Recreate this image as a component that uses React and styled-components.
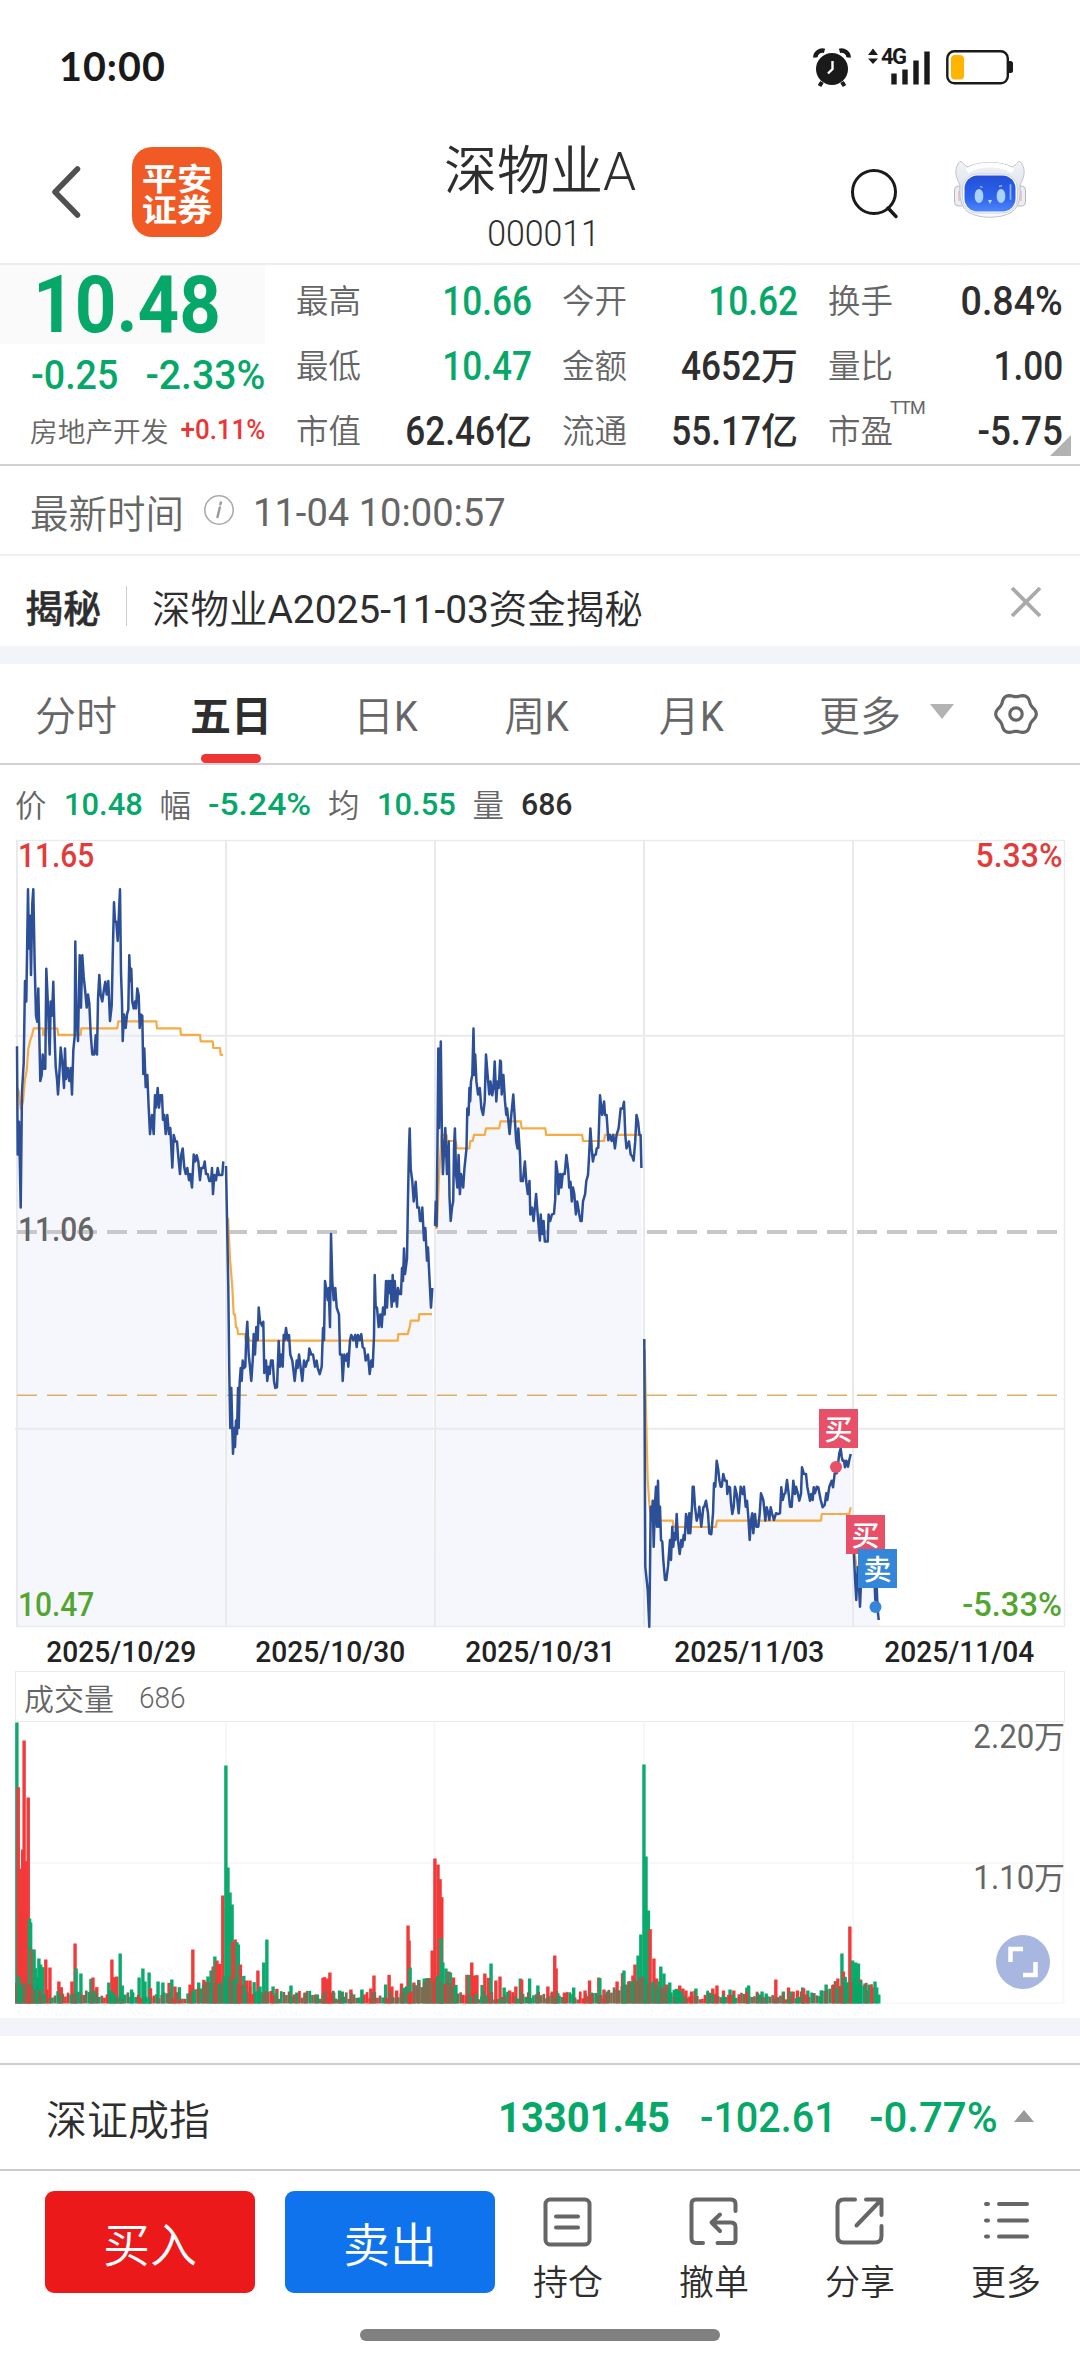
import styled, { createGlobalStyle } from 'styled-components';
import React from 'react';

const GREEN = '#06a869';
const RED = '#ee3535';
const DARK = '#2e2e2e';
const GREY = '#666666';

const quotes = [
  { label: '最高', value: '10.66', color: GREEN },
  { label: '今开', value: '10.62', color: GREEN },
  { label: '换手', value: '0.84%', stretch: 0.94 },
  { label: '最低', value: '10.47', color: GREEN },
  { label: '金额', value: '4652', unit: '万' },
  { label: '量比', value: '1.00' },
  { label: '市值', value: '62.46', unit: '亿' },
  { label: '流通', value: '55.17', unit: '亿' },
  { label: '市盈', value: '-5.75', sup: 'TTM', stretch: 0.92 },
];

const dates = ['2025/10/29', '2025/10/30', '2025/10/31', '2025/11/03', '2025/11/04'];

// every day has its own grid: origin, units per pixel, price points, average points
const days = [
  {
    ox: 0, oy: 830, sx: 3, sy: 2.45,
    price: '51,530 53,795 57,715 62,925 66,640 71,570 75,370 79,420 84,145 87,290 90,210 93,355 97,180 100,145 104,330 108,455 112,470 115,388 118,500 121,615 125,600 128,550 132,585 136,585 139,340 144,430 149,550 152,420 156,455 160,372 164,510 167,580 171,610 174,648 178,600 182,533 187,570 192,632 195,535 198,610 203,583 208,615 212,583 216,648 220,540 224,505 226,273 229,450 234,517 239,307 243,435 247,307 251,360 255,390 260,435 264,403 268,425 272,500 277,550 283,550 287,503 291,550 294,415 298,355 302,405 307,420 312,390 316,372 320,403 325,370 330,468 335,430 338,310 342,177 345,225 349,225 353,272 357,200 360,145 363,350 366,420 368,517 372,452 377,485 381,452 385,440 388,307 391,370 394,340 397,420 401,437 405,420 408,437 412,388 416,405 419,485 422,452 427,455 430,598 433,535 437,630 442,600 446,680 450,745 456,698 461,745 465,650 468,680 473,632 477,680 481,650 486,650 489,710 493,698 497,745 502,698 507,745 511,730 517,827 521,747 526,763 531,763 535,800 540,843 544,795 548,780 553,827 557,843 562,828 567,858 571,843 576,876 581,795 586,812 590,797 595,812 600,858 604,828 610,828 614,812 618,843 623,843 628,860 633,860 636,828 639,892 643,845 648,858 653,828 657,845 667,845 670,812',
    avg: '51,630 56,640 62,683 69,665 75,610 80,590 85,535 91,515 96,503 101,486 129,486 129,502 133,502 136,486 172,486 175,502 242,502 244,486 352,486 355,469 469,469 471,486 541,486 543,502 600,502 602,518 638,518 640,534 660,534 662,551 669,551',
  },
  {
    ox: 0, oy: 830, sx: 3, sy: 2.45,
    price: '678,823 681,950 685,1120 688,1330 691,1465 694,1367 697,1465 699,1528 702,1465 705,1512 708,1447 711,1480 714,1367 716,1465 719,1352 722,1318 725,1350 728,1300 732,1318 736,1315 739,1240 742,1205 746,1285 750,1315 754,1350 758,1300 761,1235 765,1285 769,1218 773,1250 776,1170 780,1203 786,1215 790,1205 793,1330 798,1300 802,1350 806,1315 809,1333 813,1300 818,1300 822,1350 826,1367 831,1365 834,1300 836,1252 840,1315 844,1285 848,1315 851,1237 854,1250 858,1220 863,1250 867,1237 871,1285 877,1300 884,1350 890,1300 893,1318 897,1285 902,1318 907,1350 912,1300 917,1315 922,1300 925,1300 928,1270 934,1285 939,1285 945,1315 950,1300 953,1318 959,1333 965,1315 969,1220 972,1250 975,1105 979,1125 983,1152 986,1122 990,1218 993,990 997,1105 1001,1152 1006,1122 1010,1170 1017,1187 1020,1285 1025,1285 1028,1350 1033,1285 1038,1300 1042,1283 1045,1315 1050,1250 1054,1237 1060,1250 1066,1237 1070,1267 1074,1237 1079,1250 1084,1235 1088,1267 1093,1270 1097,1300 1104,1285 1109,1333 1114,1300 1118,1315 1122,1240 1124,1090 1127,1170 1131,1170 1136,1218 1141,1187 1145,1218 1149,1170 1154,1187 1158,1105 1161,1170 1165,1105 1170,1135 1171,1105 1175,1168 1178,1090 1181,1155 1184,1105 1187,1140 1191,1168 1194,1122 1198,1137 1203,1137 1206,1073 1209,1105 1212,1025 1215,1088 1221,1050 1224,900 1227,780 1229,731 1232,830 1237,860 1241,910 1247,862 1252,925 1257,925 1260,958 1264,958 1267,925 1272,1005 1276,975 1281,1055 1284,1023 1288,1090 1293,1170 1297,1122',
    avg: '684,950 690,1050 697,1120 701,1187 705,1187 708,1218 712,1220 714,1235 735,1235 737,1251 742,1235 748,1251 1193,1251 1195,1235 1223,1235 1229,1218 1232,1202 1256,1202 1258,1186 1296,1186',
  },
  {
    ox: 430, oy: 830, sx: 2.412, sy: 2.45,
    price: '12,970 14,910 16,970 18,760 20,535 22,730 24,620 26,518 29,760 31,843 34,780 37,730 41,843 45,763 47,900 50,958 53,925 56,910 58,780 60,731 63,845 66,876 69,796 72,892 75,843 80,876 83,830 88,780 90,682 93,698 95,632 97,665 99,616 102,600 105,486 107,600 109,550 112,616 116,648 120,632 124,682 128,698 132,665 135,550 139,600 143,648 146,616 150,650 153,632 156,567 160,665 163,616 166,632 169,565 171,567 173,648 177,600 181,665 184,698 186,682 192,745 196,698 201,648 205,715 208,763 211,780 213,731 217,795 219,860 224,860 229,812 232,860 236,892 240,860 242,942 246,925 250,958 256,892 261,958 265,1006 267,942 271,990 274,958 277,1008 284,1008 286,942 290,958 294,942 299,940 302,905 304,812 308,843 310,892 314,843 317,876 320,843 325,843 329,796 333,830 336,876 339,862 342,910 345,876 348,892 352,942 355,910 360,942 363,958 366,958 369,910 374,892 377,860 381,845 383,812 387,731 390,780 393,812 396,796 400,795 402,780 406,778 410,650 415,698 420,665 422,698 426,698 430,760 434,747 438,762 442,747 446,780 450,747 455,731 460,682 465,682 468,666 471,747 474,780 480,763 484,795 488,800 491,810 495,763 498,698 502,715 505,747 508,747 510,828',
    avg: '12,975 17,975 22,845 28,747 40,747 42,762 62,762 65,780 95,780 97,762 103,762 106,747 132,747 135,731 167,731 170,714 219,714 221,731 278,731 280,747 367,747 369,762 420,762 422,747 508,747',
  },
  {
    ox: 600, oy: 1370, sx: 3, sy: 3,
    price: '133,-93 136,590 143,660 148,770 150,600 152,410 156,450 158,392 161,530 165,400 168,350 171,470 174,332 177,470 180,410 183,510 187,515 190,570 195,630 199,630 204,590 210,510 213,570 217,470 220,530 223,490 226,510 230,432 234,510 239,552 244,510 247,530 251,495 254,510 258,432 262,450 265,490 268,430 271,490 276,410 278,350 281,350 285,410 290,452 296,430 298,410 304,470 310,412 313,410 318,392 324,430 328,490 334,493 339,430 342,340 346,350 350,272 355,300 358,330 362,350 365,350 370,312 375,332 380,332 382,372 386,350 390,352 393,400 397,432 401,410 405,350 410,372 416,430 422,350 428,372 432,350 437,410 441,392 445,440 449,510 453,450 457,430 460,490 465,432 469,470 475,470 479,430 483,370 490,390 494,430 496,452 500,412 505,430 508,450 512,412 516,430 522,450 528,430 534,432 540,430 544,352 548,390 553,372 556,370 561,330 566,372 570,410 575,410 580,332 585,372 588,350 594,372 598,392 603,372 606,292 612,312 618,312 622,350 626,372 630,392 634,372 638,390 641,352 645,370 650,350 655,352 662,390 668,412 674,405 679,370 682,390 688,350 695,332 699,352 704,310 710,310 713,290 718,250 722,235 725,260 728,272 732,272 735,292 739,272 744,290 748,270 752,252',
    avg: '134,-60 138,120 143,330 148,400 151,430 155,452 218,452 221,471 347,471 351,452 663,452 665,432 748,432 752,412',
  },
  {
    ox: 600, oy: 1370, sx: 3, sy: 3,
    price: '759,470 762,560 766,640 769,690 773,592 777,650 780,710 783,640 790,560 796,600 804,570 815,610 822,600 826,690 830,650 833,720 836,750',
    avg: '759,520 764,552 770,592 778,600',
  },
];

// x, top and side (g sells, r buys) of the taller minutes
const volumes = '49,246,g 53,440,r 57,684,r 61,795,r 66,627,r 70,300,r 76,662,r 82,471,r 86,834,g 89,846,g 93,927,r 99,927,g 103,983,g 108,1010,g 113,954,g 118,972,g 124,980,g 133,957,r 145,981,r 171,1023,r 178,1040,r 209,1023,r 218,909,r 221,984,g 235,999,g 264,1015,g 270,1011,r 281,1040,r 316,1026,g 325,957,r 333,1010,r 339,1008,r 349,939,g 355,1035,g 382,1047,g 404,1011,g 415,984,g 421,1023,g 433,996,g 437,1043,r 459,1023,g 473,1026,g 491,1027,r 499,1017,g 508,1038,r 521,1040,g 552,1032,r 560,927,r 577,1026,g 592,1018,r 604,1008,g 613,990,g 619,978,r 624,948,g 630,960,r 638,970,r 647,765,r 656,375,g 662,681,g 668,756,g 674,792,g 676,905,r 683,897,r 688,905,g 692,912,g 698,972,r 708,1006,g 716,1020,r 726,1020,r 738,1025,g 749,990,r 755,1038,g 766,966,g 775,897,g 793,1038,g 804,1045,r 845,1035,g 862,1056,g 886,1056,r 920,1062,r 938,1012,r 942,1010,r 951,1014,r 958,996,r 969,1056,g 986,1050,g 994,1053,g 1019,1047,r 1051,1047,g 1077,1044,r 1086,1005,r 1120,1032,g 1130,1003,r 1138,1038,r 1152,1050,r 1166,1029,r 1172,1042,g 1185,855,r 1188,900,r 1191,981,g 1202,1026,r 1216,1018,g 1232,1014,g 1240,1013,g 1246,1014,g 1255,930,r 1263,654,r 1272,672,r 1278,716,r 1283,770,r 1281,893,g 1286,966,g 1295,984,g 1303,993,r 1308,996,g 1317,1011,r 1324,1033,g 1356,1003,r 1362,1003,g 1370,966,r 1378,1005,r 1385,1004,r 1400,1033,g 1408,999,r 1418,1012,r 1426,969,g 1440,1020,r 1452,1008,r 1464,1041,g 1480,1050,r 1498,1038,r 1511,1014,g 1515,1017,r 1538,1014,g 1562,1035,g 1591,1038,r 1604,1053,r 1611,945,r 1615,984,r 1620,1058,g 1639,1056,r 1666,1041,g 1699,1050,r 1712,1020,r 1717,1056,g 1739,1011,r 1742,1013,g 1754,1047,r 1763,1053,g 1792,1023,r 1808,998,r 1812,990,g 1817,1032,g 1826,1023,r 1838,1005,r 1844,972,r 1853,945,g 1861,882,g 1870,372,g 1876,648,g 1883,810,g 1888,866,r 1899,954,r 1907,1014,r 1914,1023,g 1919,978,g 1928,999,g 1936,1032,r 1945,1026,g 1958,1048,g 1964,1045,g 1974,1035,r 1983,1044,r 1992,1050,r 2008,1053,r 2021,1044,g 2056,1056,g 2070,1044,r 2082,1035,r 2101,1050,r 2120,1047,g 2131,1050,r 2169,1041,g 2174,1035,g 2200,1058,r 2213,1053,g 2225,1059,g 2253,1017,r 2275,1053,g 2290,1041,r 2297,1053,g 2316,1050,r 2331,1041,g 2334,1044,r 2346,1050,g 2385,1050,g 2399,1032,g 2421,1032,r 2433,1014,r 2445,939,g 2449,993,r 2453,1011,g 2460,1032,r 2468,858,r 2476,960,g 2485,966,g 2493,969,g 2499,1017,r 2512,1029,r 2520,1050,g 2533,1041,r 2541,1023,g 2546,1041,g 2552,1062,g'
  .split(' ')
  .map((item) => {
    const [x, top, side] = item.split(',');
    return { x: x / 2.904 - 15, h: (1089 - top) / 3, side };
  });

// the quiet minutes between the peaks
const quiet = Array.from({ length: 330 }, (_, i) => {
  const x = 1 + i * 2.6;
  const day = x % 209;
  const near = Math.max(0, 1 - Math.min(day, 209 - day) / 38);
  const noise = Math.abs(Math.sin(i * 12.9898) * 43758.5453) % 1;
  const tint = ['#806b50', '#f43434', '#806b50', GREEN, '#806b50', GREEN];
  return { x, h: 4 + noise * 9 + near * 17, color: tint[Math.floor(noise * 97) % 6] };
});

const toPoints = (day, key) =>
  day[key].split(' ').map((pair) => {
    const [x, y] = pair.split(',').map(Number);
    return [day.ox + x / day.sx - 15, day.oy + y / day.sy - 839];
  });

const join = (points) => points.map((p) => `${p[0].toFixed(1)},${p[1].toFixed(1)}`).join(' ');

// six soft teeth
const gear = Array.from({ length: 72 }, (_, i) => {
  const a = (i * Math.PI) / 36;
  const r = 18.8 + 1.5 * Math.cos(6 * a);
  return [23 + r * Math.cos(a), 23 + r * Math.sin(a)];
});

const App = () => {
  return (
    <Page>
      <GlobalStyle />
      <StatusBar />
      <Header />
      <QuotePanel />
      <TimeRow>
        <span>最新时间</span>
        <InfoIcon viewBox="0 0 32 32">
          <circle cx="16" cy="16" r="14.2" fill="none" stroke="#aaa" strokeWidth="1.6" />
          <path d="M17.8 8.500l-.4 1.800M16.800 13.500l-2.300 9.500" fill="none" stroke="#999" strokeWidth="2.400" strokeLinecap="round" />
        </InfoIcon>
        <Num $size={38.500} $weight={400} $top={5} $sx={0.99}>11-04 10:00:57</Num>
      </TimeRow>
      <NewsRow>
        <NewsTag>揭秘</NewsTag>
        <NewsText>
          深物业<Num $size={39} $weight={400} $ls={-0.1}>A2025-11-03</Num>资金揭秘
        </NewsText>
        <CloseIcon viewBox="0 0 34 34">
          <path d="M3 3l28 28M31 3L3 31" stroke="#aaa" strokeWidth="3.8" />
        </CloseIcon>
      </NewsRow>
      <Band />
      <Tabs />
      <Legend>
        价<Num $size={31.5} $weight={500} $color={GREEN} $w={79} $top={3} $sx={0.98}>10.48</Num>
        幅<Num $size={31.5} $weight={500} $color={GREEN} $w={103} $top={3} $sx={1.07}>-5.24%</Num>
        均<Num $size={31.5} $weight={500} $color={GREEN} $w={79} $top={3} $sx={0.98}>10.55</Num>
        量<Num $size={31.5} $weight={500} $color={DARK} $top={3} $sx={0.96}>686</Num>
      </Legend>
      <PriceChart />
      <Dates>
        {dates.map((date) => (
          <Num key={date} $size={29} $weight={500} $color="#222" $sx={0.97} $origin="center">{date}</Num>
        ))}
      </Dates>
      <VolumeChart />
      <Band />
      <IndexRow>
        <IndexName>深证成指</IndexName>
        <Num $size={42} $weight={700} $color={GREEN} $w={203} $top={2} $sx={0.95}>13301.45</Num>
        <Num $size={42} $weight={500} $color={GREEN} $w={169} $top={2} $sx={0.94}>-102.61</Num>
        <Num $size={42} $weight={500} $color={GREEN} $w={145} $top={2}>-0.77%</Num>
        <Triangle viewBox="0 0 20 12"><path d="M0 12L10 0l10 12z" fill="#999" /></Triangle>
      </IndexRow>
      <BottomBar />
      <HomeBar />
    </Page>
  );
};

const StatusBar = () => (
  <Status>
    <Clock>10:00</Clock>
    <svg width="38" height="40" viewBox="0 0 38 40">
      <circle cx="19" cy="21" r="16" fill="#1a1a1a" />
      <path d="M2.5 9.500C2 5 7 1.500 11.500 2.800M35.500 9.500C36 5 31 1.500 26.500 2.800" stroke="#1a1a1a" strokeWidth="4.500" fill="none" />
      <path d="M9 34l-2.500 4M29 34l2.500 4" stroke="#1a1a1a" strokeWidth="4" />
      <path d="M19.500 13v8l-4.500 4.500" stroke="#fff" strokeWidth="2.400" fill="none" />
    </svg>
    <Signal>
      <svg width="62" height="40" viewBox="0 0 62 40">
        <path d="M0 7l5-6.500L10 7zM0 10.500h10L5 16z" fill="#1a1a1a" />
        <path d="M26 25.500v11M37 21.500v15M48 12.500v24M59 3.500v33" stroke="#1a1a1a" strokeWidth="5.400" />
      </svg>
      <SignalLabel>4G</SignalLabel>
    </Signal>
    <svg width="68" height="40" viewBox="0 -2 68 40">
      <rect x="1.300" y="1.300" width="60.500" height="32" rx="7" fill="none" stroke="#1a1a1a" strokeWidth="2.400" />
      <rect x="5" y="5" width="13" height="24.500" rx="4" fill="#ffb400" />
      <path d="M63 11h1.500q2.500 0 2.500 2.500v7q0 2.500-2.500 2.500H63z" fill="#1a1a1a" />
    </svg>
  </Status>
);

const Header = () => (
  <HeaderBar>
    <HeaderSide>
      <svg width="32" height="56" viewBox="0 0 32 56">
        <path d="M27.500 5L5 28l22.500 23" fill="none" stroke="#505050" strokeWidth="5.500" strokeLinecap="round" strokeLinejoin="round" />
      </svg>
      <Logo>
        <LogoText>平安证券</LogoText>
      </Logo>
    </HeaderSide>
    <TitleBox>
      <Title>深物业<Num $size={53} $weight={300}>A</Num></Title>
      <Num $size={36} $weight={300} $color={DARK} $sx={0.94} $origin="right">000011</Num>
    </TitleBox>
    <HeaderSide $end>
      <SearchIcon viewBox="0 0 50 54">
        <circle cx="24" cy="24" r="21.500" fill="none" stroke="#1a1a1a" strokeWidth="3" />
        <path d="M38 40l8 8.500" stroke="#1a1a1a" strokeWidth="3.400" strokeLinecap="round" />
      </SearchIcon>
      <svg width="74" height="60" viewBox="0 0 74 60">
        <defs>
          <linearGradient id="face" x1="0" y1="0" x2="0" y2="1">
            <stop offset="0" stopColor="#2350d6" />
            <stop offset="0.600" stopColor="#2c62ee" />
            <stop offset="1" stopColor="#4d86f8" />
          </linearGradient>
          <linearGradient id="shell" x1="0" y1="0" x2="0" y2="1">
            <stop offset="0" stopColor="#f1f3f7" />
            <stop offset="0.500" stopColor="#dfe3ea" />
            <stop offset="1" stopColor="#fafbfd" />
          </linearGradient>
        </defs>
        <rect x="1.500" y="26" width="11" height="20" rx="4" fill="#eceef2" stroke="#b4b8c2" />
        <rect x="61.500" y="26" width="11" height="20" rx="4" fill="#eceef2" stroke="#b4b8c2" />
        <path d="M6 31v10M68 31v10" stroke="#e2b3ab" strokeWidth="1.200" />
        <path d="M7 1.500C10 1 10 5 15 7C26 1 48 1 59 7C64 5 64 1 67 1.500C73 8 72 16 67 25C68 35 67 46 59 52C48 59 26 59 15 52C7 46 6 35 7 25C2 16 1 8 7 1.500z" fill="url(#shell)" stroke="#bfc3cb" strokeWidth="1" />
        <path d="M14 11C26 3 48 3 60 11" stroke="#fff" strokeWidth="5" fill="none" />
        <rect x="9.500" y="14" width="55" height="39" rx="15" fill="#fff" stroke="#c4c9d4" strokeWidth="0.800" />
        <rect x="11.500" y="15.500" width="51" height="36" rx="13" fill="url(#face)" />
        <ellipse cx="26" cy="36" rx="4.400" ry="7" fill="#a9d2ff" />
        <ellipse cx="48" cy="36" rx="4.400" ry="7" fill="#a9d2ff" />
        <path d="M27 26.500l2.500.8M46 26.500l3-.8" stroke="#9fc4ff" strokeWidth="1.300" />
        <path d="M35 40h4l-2 4z" fill="#b8dbff" />
        <path d="M57.500 25v14" stroke="#8cb2ff" strokeWidth="1.800" strokeLinecap="round" />
      </svg>
    </HeaderSide>
  </HeaderBar>
);

const QuotePanel = () => (
  <Quote>
    <QuoteMain>
      <BigPrice>
        <Num $size={79} $weight={700} $color={GREEN} $sx={0.92}>10.48</Num>
      </BigPrice>
      <Change>
        <Num $size={40} $weight={500} $color={GREEN} $sx={0.94}>-0.25</Num>
        <Num $size={40} $weight={500} $color={GREEN} $sx={0.98} $origin="right">-2.33%</Num>
      </Change>
      <Sector>
        <span>房地产开发</span>
        <Num $size={27} $weight={500} $color={RED} $top={2} $sx={0.96} $origin="right">+0.11%</Num>
      </Sector>
    </QuoteMain>
    <QuoteGrid>
      {quotes.map((q) => (
        <QuoteCell key={q.label}>
          <QuoteLabel>
            {q.label}
            {q.sup && <Sup>{q.sup}</Sup>}
          </QuoteLabel>
          <QuoteValue>
            <Num $size={40} $weight={500} $color={q.color || DARK} $sx={q.stretch || 0.88} $origin="right">
              {q.value}
            </Num>
            {q.unit}
          </QuoteValue>
        </QuoteCell>
      ))}
    </QuoteGrid>
    <Corner />
  </Quote>
);

const Tabs = () => (
  <TabBar>
    <Tab $left={35}>分时</Tab>
    <Tab $left={73} $active>五日</Tab>
    <Tab $left={81}>日<Num $size={42} $weight={400} $sx={0.9}>K</Num></Tab>
    <Tab $left={84}>周<Num $size={42} $weight={400} $sx={0.9}>K</Num></Tab>
    <Tab $left={87}>月<Num $size={42} $weight={400} $sx={0.9}>K</Num></Tab>
    <Tab $left={93}>更多</Tab>
    <TabArrow viewBox="0 0 24 15"><path d="M0 0h24L12 15z" fill="#b3b3b3" /></TabArrow>
    <svg width="46" height="46" viewBox="0 0 46 46">
      <polygon points={join(gear)} fill="none" stroke={GREY} strokeWidth="3.200" strokeLinejoin="round" />
      <circle cx="23" cy="23" r="6.200" fill="none" stroke={GREY} strokeWidth="3.200" />
    </svg>
  </TabBar>
);

const PriceChart = () => (
  <ChartBox>
    <svg width="1052" height="790" viewBox="0 0 1052 790">
      {days.map((day) => {
        const points = toPoints(day, 'price');
        const last = points[points.length - 1][0];
        return (
          <polygon
            key={day.price}
            fill="#f5f7fc"
            points={`${points[0][0]},787 ${join(points)} ${last + 2},787`}
          />
        );
      })}
      <path d="M2 1.500H1049.500V787.500H2z" fill="none" stroke="#ebebeb" strokeWidth="1.500" />
      <path d="M0 196.700H1049M0 589.700H1049M2 1V787M211 1V787M420 1V787M629 1V787M838 1V787" stroke="#e9eaec" strokeWidth="2" />
      <path d="M2 393H1049" stroke="#c8c8cb" strokeWidth="4" strokeDasharray="20 10" />
      <path d="M2 556.300H1049" stroke="#dfb063" strokeWidth="1.400" strokeDasharray="20 10" />
      {days.map((day) => (
        <g key={day.avg} fill="none" strokeLinejoin="round">
          <polyline points={join(toPoints(day, 'avg'))} stroke="#f6ac45" strokeWidth="2.200" />
          <polyline points={join(toPoints(day, 'price'))} stroke="#2d4f97" strokeWidth="2.500" />
        </g>
      ))}
      <circle cx="821" cy="628" r="6" fill="#e84f68" />
      <circle cx="860.500" cy="768" r="6" fill="#3487d8" />
    </svg>
    <AxisText $left={3} $top={-4} $color="#e23b3b"><Num $size={34} $weight={500} $sx={0.88}>11.65</Num></AxisText>
    <AxisText $left={3} $top={370}><Num $size={34} $weight={500} $sx={0.88}>11.06</Num></AxisText>
    <AxisText $left={3} $top={745} $color="#52a52f"><Num $size={34} $weight={500} $sx={0.88}>10.47</Num></AxisText>
    <AxisText $right={4} $top={-4} $color="#e23b3b"><Num $size={34} $weight={500} $sx={0.94} $origin="right">5.33%</Num></AxisText>
    <AxisText $right={4} $top={745} $color="#52a52f"><Num $size={34} $weight={500} $sx={0.96} $origin="right">-5.33%</Num></AxisText>
    <Marker $left={804} $top={570}>买</Marker>
    <Marker $left={831} $top={676}>买</Marker>
    <Marker $left={843} $top={710} $sell>卖</Marker>
  </ChartBox>
);

const VolumeChart = () => (
  <VolumeBox>
    <VolumeHead>
      成交量<Num $size={29.5} $weight={300} $top={4} $sx={0.95}>686</Num>
    </VolumeHead>
    <VolumePlot>
      <svg width="1050" height="282" viewBox="0 0 1050 282">
        <path d="M0 141H1049M211 0V282M419.500 0V282M629 0V282M838 0V282M1048.500 0V282M0 281.500H1049" stroke="#f7f7f7" strokeWidth="2" />
        {volumes.map((bar, i) => (
          <rect key={i} x={bar.x - 1.7} y={281.5 - bar.h} width="3.4" height={bar.h} fill={bar.side === 'g' ? '#0baa6d' : '#f23a3a'} />
        ))}
        {quiet.map((bar, i) => (
          <rect key={i} x={bar.x - 1.3} y={281.5 - bar.h} width="2.7" height={bar.h} fill={bar.color} />
        ))}
      </svg>
      <AxisText $right={-14} $top={-6}><Num $size={34} $weight={400} $sx={0.92} $origin="right">2.20</Num>万</AxisText>
      <AxisText $right={-14} $top={135}><Num $size={34} $weight={400} $sx={0.92} $origin="right">1.10</Num>万</AxisText>
      <Expand>
        <svg width="32" height="32" viewBox="0 0 32 32">
          <path d="M3.500 16V3H16M28.500 16V29H16" fill="none" stroke="#fff" strokeWidth="4.500" />
        </svg>
      </Expand>
    </VolumePlot>
  </VolumeBox>
);

const BottomBar = () => (
  <Bottom>
    <TradeButton>买入</TradeButton>
    <TradeButton $sell>卖出</TradeButton>
    <Actions>
      <Action>
        <ActionIcon viewBox="0 0 50 50">
          <rect x="2.500" y="2.500" width="44" height="45" rx="4.500" />
          <path d="M13 19.500h22M13 30.500h22" />
        </ActionIcon>
        持仓
      </Action>
      <Action>
        <ActionIcon viewBox="0 0 50 50">
          <path d="M14 46H7q-4.500 0-4.500-4.500V7q0-4.500 4.500-4.500h35q4.500 0 4.500 4.500v7M28.500 46H43.500q3 0 3-3V30q0-4.500-4.500-4.500H23M31 17.500l-8.500 8 8.500 8.500" />
        </ActionIcon>
        撤单
      </Action>
      <Action>
        <ActionIcon viewBox="0 0 50 50">
          <path d="M20 2.500H9q-6.500 0-6.500 6.500v30q0 6.500 6.500 6.500h31q6.500 0 6.500-6.500V29M31 2.500h15.500V18M46 3L21.500 28.500" />
        </ActionIcon>
        分享
      </Action>
      <Action>
        <ActionIcon viewBox="0 0 50 50">
          <path d="M5 7h2M18 7h28M5 23.500h2M18 23.500h28M5 39.500h2M18 39.500h28" />
        </ActionIcon>
        更多
      </Action>
    </Actions>
  </Bottom>
);

const GlobalStyle = createGlobalStyle`
  body {
    margin: 0;
    background: #fff;
  }

  * {
    box-sizing: border-box;
  }

  svg {
    display: block;
    flex: none;
  }
`;

const Page = styled.div`
  width: 1080px;
  height: 2362px;
  display: flex;
  flex-direction: column;
  overflow: hidden;
  background: #fff;
  color: ${GREY};
  font-family: 'Noto Sans CJK SC', sans-serif;
  font-weight: 350;
  white-space: nowrap;

  & > * {
    flex: none;
  }
`;

const Num = styled.span`
  display: inline-block;
  font-family: Roboto, 'Noto Sans CJK SC', sans-serif;
  font-size: ${(p) => p.$size}px;
  font-weight: ${(p) => p.$weight};
  line-height: 1;
  color: ${(p) => p.$color || 'inherit'};
  letter-spacing: ${(p) => p.$ls || 0}px;
  padding-top: ${(p) => p.$top || 0}px;
  transform: scaleX(${(p) => p.$sx || 1});
  transform-origin: ${(p) => p.$origin || 'left'};
  ${(p) => p.$w && `width: ${p.$w}px;`}
`;

const Status = styled.div`
  height: 130px;
  display: flex;
  align-items: flex-start;
  padding: 48px 66px 0 59px;
`;

const Clock = styled.div`
  flex: 1;
  font: 700 39.5px/36px Lato, sans-serif;
  letter-spacing: 1px;
  color: #1a1a1a;
`;

const Signal = styled.div`
  position: relative;
  margin: 0 16px 0 17px;
`;

const SignalLabel = styled.span`
  position: absolute;
  left: 13px;
  top: -1px;
  font: 700 22px/20px Roboto, sans-serif;
  letter-spacing: -1.5px;
  color: #1a1a1a;
`;

const HeaderBar = styled.div`
  height: 135px;
  display: grid;
  grid-template-columns: 1fr auto 1fr;
  border-bottom: 2px solid #ededed;
`;

const HeaderSide = styled.div`
  display: flex;
  align-items: center;
  height: 124px;
  gap: ${(p) => (p.$end ? 53 : 50)}px;
  justify-content: ${(p) => (p.$end ? 'flex-end' : 'flex-start')};
  padding: ${(p) => (p.$end ? '0 53px 5px 0' : '0 0 0 50px')};
`;

const SearchIcon = styled.svg`
  width: 50px;
  height: 54px;
  margin-top: 11px;
`;

const Logo = styled.div`
  width: 90px;
  height: 90px;
  display: flex;
  align-items: center;
  justify-content: center;
  border-radius: 20px;
  background: #f15a24;
`;

const LogoText = styled.div`
  width: 62px;
  color: #fff;
  font-size: 31px;
  font-weight: 700;
  line-height: 31px;
  white-space: normal;
  word-break: break-all;
  transform: scaleX(1.14);
`;

const TitleBox = styled.div`
  display: flex;
  flex-direction: column;
  align-items: center;
`;

const Title = styled.div`
  height: 86px;
  font-size: 53px;
  line-height: 74px;
  color: ${DARK};
`;

const Quote = styled.div`
  position: relative;
  height: 201px;
  display: flex;
  border-bottom: 2px solid #d2d2d2;
`;

const QuoteMain = styled.div`
  width: 265px;
`;

const BigPrice = styled.div`
  height: 79px;
  padding: 1px 0 0 33px;
  background: #fafafa;
`;

const Change = styled.div`
  height: 63px;
  display: flex;
  align-items: center;
  justify-content: space-between;
  padding-left: 31px;
`;

const Sector = styled.div`
  height: 46px;
  display: flex;
  align-items: center;
  justify-content: space-between;
  padding: 0 0 1px 30px;
  font-size: 27.7px;
`;

const QuoteGrid = styled.div`
  flex: 1;
  display: grid;
  grid-template-columns: 236px 236px 235px;
  grid-auto-rows: 65px;
  column-gap: 30px;
  padding: 1px 0 0 31px;
`;

const QuoteCell = styled.div`
  display: flex;
  align-items: center;
  justify-content: space-between;
`;

const QuoteLabel = styled.div`
  position: relative;
  font-size: 32.5px;
`;

const Sup = styled.span`
  position: absolute;
  left: 62px;
  top: -9px;
  font: 400 18px/24px Roboto, sans-serif;
  letter-spacing: -0.8px;
`;

const QuoteValue = styled.div`
  font-size: 37px;
  font-weight: 500;
  line-height: 60px;
  color: ${DARK};
`;

const Corner = styled.i`
  position: absolute;
  right: 9px;
  bottom: 8px;
  border-left: 21px solid transparent;
  border-bottom: 21px solid #b2b2b2;
`;

const TimeRow = styled.div`
  height: 90px;
  display: flex;
  align-items: center;
  padding: 1px 0 0 30px;
  border-bottom: 2px solid #f0f0f0;
  font-size: 38.5px;
`;

const InfoIcon = styled.svg`
  width: 32px;
  height: 32px;
  margin: 0 18px 2px 19px;
`;

const NewsRow = styled.div`
  height: 90px;
  display: flex;
  align-items: center;
  padding: 9px 37px 0 25px;
  color: ${DARK};
`;

const NewsTag = styled.div`
  padding-right: 25px;
  border-right: 1px solid #ccc;
  font-size: 38px;
  font-weight: 500;
  line-height: 40px;
  -webkit-text-stroke: 0.4px ${DARK};
`;

const NewsText = styled.div`
  flex: 1;
  padding-left: 25px;
  font-size: 38.5px;
`;

const CloseIcon = styled.svg`
  width: 34px;
  height: 34px;
  margin-bottom: 7px;
`;

const Band = styled.div`
  height: 18px;
  background: #f3f4f9;
`;

const TabBar = styled.div`
  height: 101px;
  display: flex;
  align-items: center;
  border-bottom: 2px solid #d2d2d2;
`;

const Tab = styled.div`
  position: relative;
  margin-left: ${(p) => p.$left}px;
  font-size: 41px;
  color: ${(p) => (p.$active ? DARK : GREY)};
  font-weight: ${(p) => (p.$active ? 700 : 350)};
  line-height: 99px;

  &::after {
    content: '';
    display: ${(p) => (p.$active ? 'block' : 'none')};
    position: absolute;
    left: 11px;
    bottom: 0;
    width: 60px;
    height: 9px;
    border-radius: 5px;
    background: #ee3535;
  }
`;

const TabArrow = styled.svg`
  width: 24px;
  height: 15px;
  margin: 0 39px 4px 29px;
`;

const Legend = styled.div`
  height: 74px;
  display: flex;
  align-items: center;
  gap: 17px;
  padding: 2px 0 0 15px;
  font-size: 31.5px;
`;

const ChartBox = styled.div`
  position: relative;
  height: 790px;
  margin-left: 15px;
`;

const AxisText = styled.div`
  position: absolute;
  top: ${(p) => p.$top}px;
  ${(p) => (p.$right === undefined ? `left: ${p.$left}px;` : `right: ${p.$right + 14}px;`)}
  font-size: 31px;
  line-height: 38px;
  font-weight: 400;
  color: ${(p) => p.$color || GREY};
`;

const Marker = styled.div`
  position: absolute;
  left: ${(p) => p.$left}px;
  top: ${(p) => p.$top}px;
  width: 39px;
  height: 39px;
  background: ${(p) => (p.$sell ? '#3487d8' : '#e84f68')};
  color: #fff;
  font-size: 28px;
  font-weight: 500;
  line-height: 38px;
  text-align: center;
`;

const Dates = styled.div`
  height: 42px;
  display: grid;
  grid-template-columns: repeat(5, 209.500px);
  align-items: center;
  justify-items: center;
  padding: 4px 0 0 16px;
`;

const VolumeBox = styled.div`
  height: 347px;
  margin: 0 15px;
`;

const VolumeHead = styled.div`
  height: 51px;
  display: flex;
  align-items: center;
  gap: 25px;
  padding-left: 8px;
  border: 1px solid #ebebeb;
  font-size: 30px;
`;

const VolumePlot = styled.div`
  position: relative;
`;

const Expand = styled.div`
  position: absolute;
  left: 981px;
  top: 213px;
  width: 54px;
  height: 54px;
  display: flex;
  align-items: center;
  justify-content: center;
  border-radius: 50%;
  background: #a8b7df;
`;

const IndexRow = styled.div`
  height: 108px;
  margin-top: 27px;
  display: flex;
  align-items: center;
  padding: 0 46px;
  border-top: 2px solid #cbcbcb;
  border-bottom: 2px solid #cbcbcb;
`;

const IndexName = styled.div`
  width: 452px;
  font-size: 41px;
  color: ${DARK};
`;

const Triangle = styled.svg`
  width: 20px;
  height: 12px;
  margin-bottom: 3px;
`;

const Bottom = styled.div`
  height: 159px;
  display: flex;
  padding: 20px 0 0 45px;
`;

const TradeButton = styled.div`
  width: 210px;
  height: 102px;
  margin-right: 30px;
  border-radius: 9px;
  background: ${(p) => (p.$sell ? '#0f73ee' : '#eb191a')};
  color: #fff;
  font-size: 47px;
  line-height: 102px;
  text-align: center;
`;

const Actions = styled.div`
  display: grid;
  grid-template-columns: repeat(4, 146px);
  margin-left: -30px;
`;

const Action = styled.div`
  display: flex;
  flex-direction: column;
  align-items: center;
  font-size: 35px;
  line-height: 66px;
  color: ${DARK};
`;

const ActionIcon = styled.svg`
  width: 50px;
  height: 50px;
  margin-top: 6px;
  fill: none;
  stroke: ${GREY};
  stroke-width: 4px;
  stroke-linecap: round;
  stroke-linejoin: round;
`;

const HomeBar = styled.div`
  width: 360px;
  height: 12px;
  margin: -1px auto 0;
  border-radius: 6px;
  background: #808080;
`;

export default App;
